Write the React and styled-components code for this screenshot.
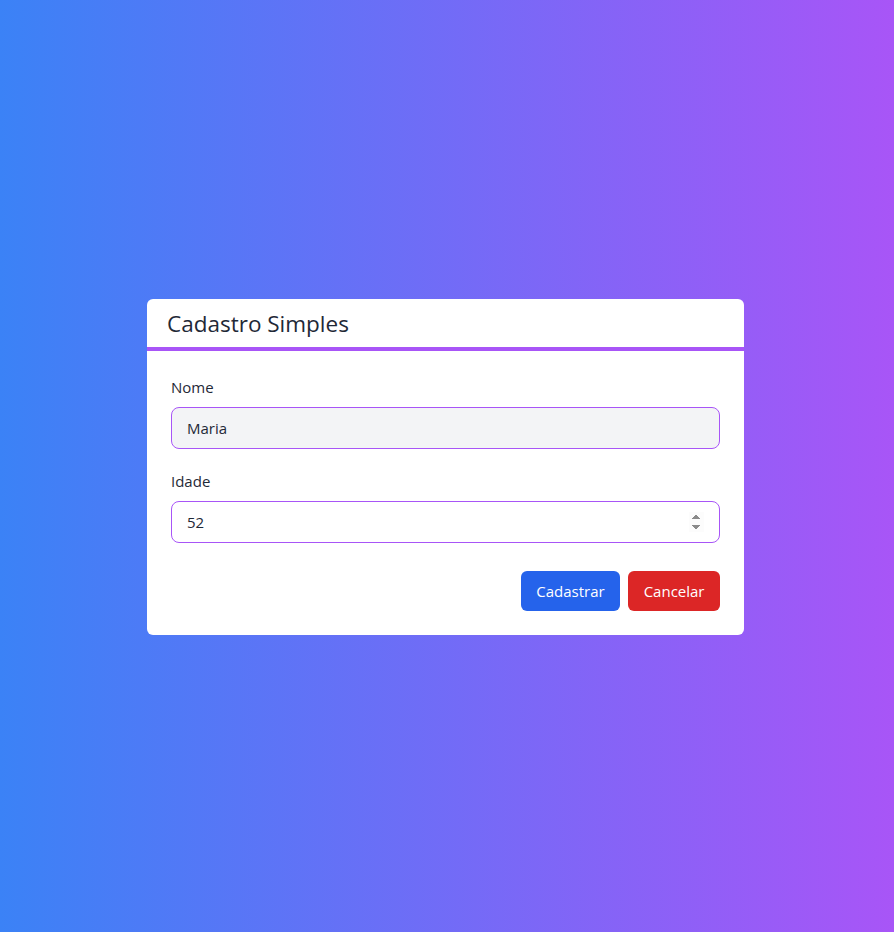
import React, { useState } from 'react';
import styled, { createGlobalStyle } from 'styled-components';

const GlobalStyle = createGlobalStyle`
  html, body {
    margin: 0;
    padding: 0;
  }
  body {
    font-family: "Open Sans", "Noto Sans", sans-serif;
    color: #1f2937;
  }
  * {
    box-sizing: border-box;
  }
`;

const Page = styled.div`
  min-height: 100vh;
  display: flex;
  align-items: center;
  justify-content: center;
  padding: 2px 3px 0 0;
  background: linear-gradient(90deg, #3b82f6 0%, #a855f7 100%);
`;

const Card = styled.div`
  width: 597px;
  background: #ffffff;
  border-radius: 6px;
  overflow: hidden;
`;

const CardHeader = styled.div`
  padding: 8px 20px 7px;
  border-bottom: 4px solid #a855f7;
`;

const Title = styled.h2`
  margin: 0;
  font-size: 22.5px;
  font-weight: 400;
  line-height: 33px;
  color: #1f2937;
`;

const Form = styled.form`
  padding: 24px;
  display: flex;
  flex-direction: column;
`;

const Field = styled.div`
  display: flex;
  flex-direction: column;
  gap: 8px;
  margin-bottom: 20px;
`;

const Label = styled.label`
  font-size: 15px;
  line-height: 24px;
  color: #1f2937;
`;

const Input = styled.input`
  height: 42px;
  padding: 8px 15px;
  font-family: inherit;
  font-size: 15px;
  color: #1f2937;
  border: 1px solid #a855f7;
  border-radius: 8px;
  background: ${(p) => (p.$muted ? '#f3f4f6' : '#ffffff')};
  outline: none;

  &::-webkit-inner-spin-button {
    background: #f0f0f0;
  }
`;

const Actions = styled.div`
  display: flex;
  justify-content: flex-end;
  gap: 8px;
  margin-top: 8px;
`;

const Button = styled.button`
  height: 40px;
  padding: 0 15.5px;
  font-family: inherit;
  font-size: 15px;
  color: #ffffff;
  border: none;
  border-radius: 6px;
  cursor: pointer;
  background: ${(p) => (p.$variant === 'danger' ? '#dc2626' : '#2563eb')};
`;

const App = () => {
  const [nome, setNome] = useState('Maria');
  const [idade, setIdade] = useState('52');

  return (
    <>
      <GlobalStyle />
      <Page>
        <Card>
          <CardHeader>
            <Title>Cadastro Simples</Title>
          </CardHeader>
          <Form onSubmit={(e) => e.preventDefault()}>
            <Field>
              <Label htmlFor="nome">Nome</Label>
              <Input id="nome" $muted value={nome} onChange={(e) => setNome(e.target.value)} />
            </Field>
            <Field>
              <Label htmlFor="idade">Idade</Label>
              <Input
                id="idade"
                type="number"
                autoFocus
                value={idade}
                onChange={(e) => setIdade(e.target.value)}
              />
            </Field>
            <Actions>
              <Button type="submit">Cadastrar</Button>
              <Button type="button" $variant="danger">Cancelar</Button>
            </Actions>
          </Form>
        </Card>
      </Page>
    </>
  );
};

export default App;
